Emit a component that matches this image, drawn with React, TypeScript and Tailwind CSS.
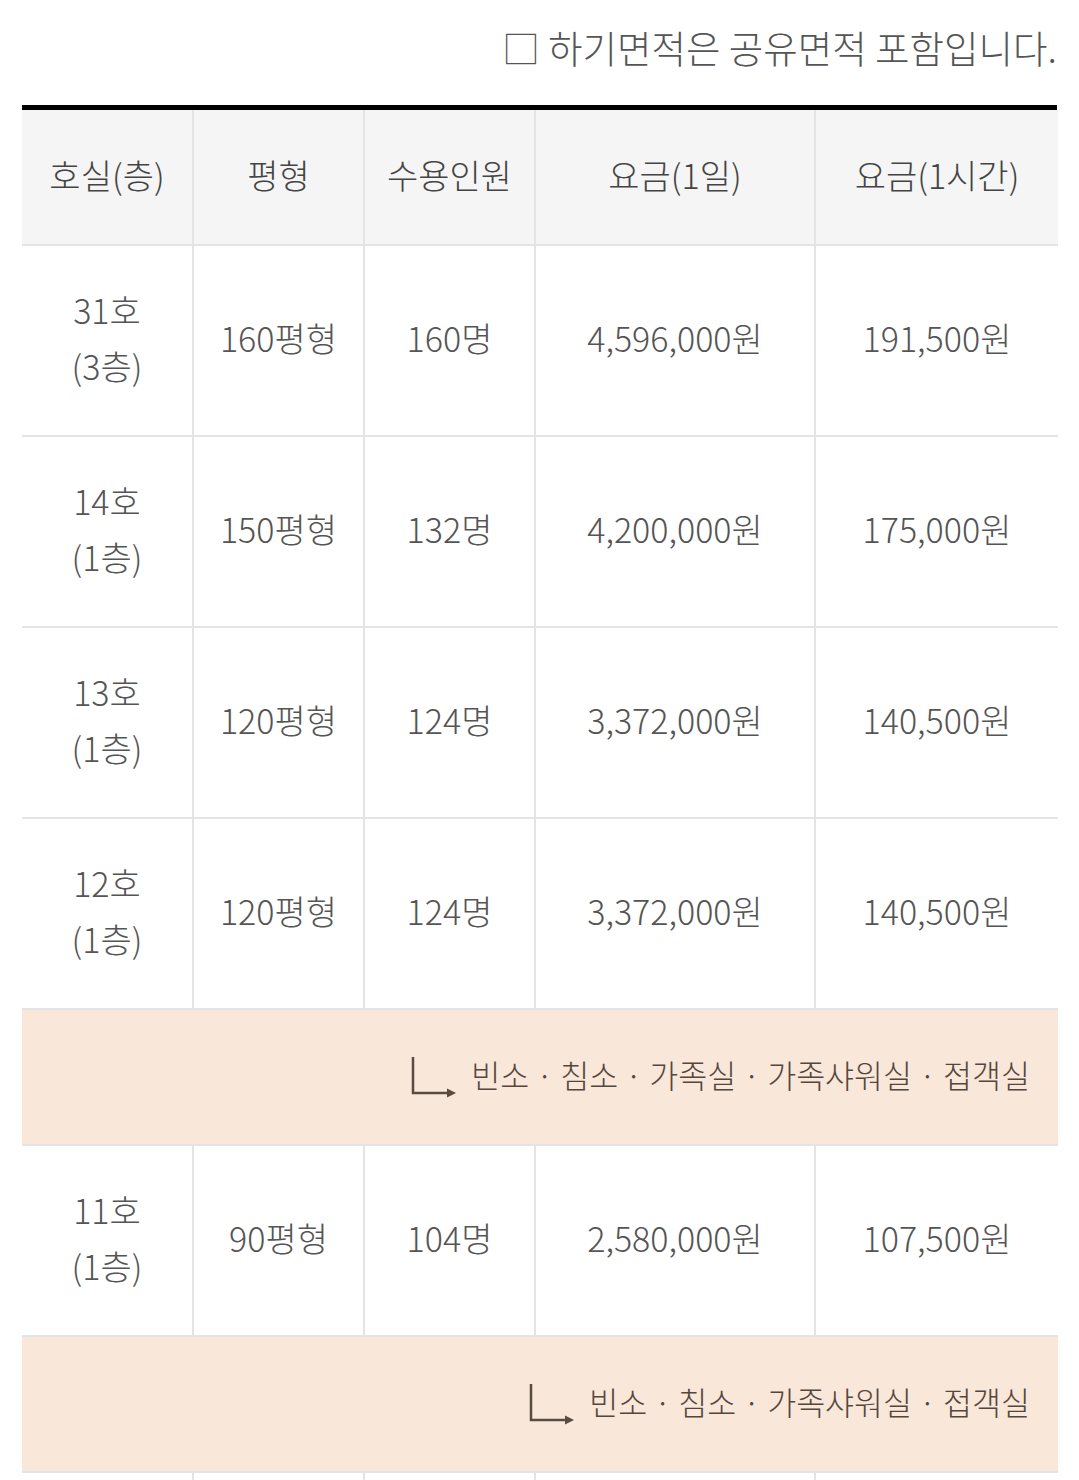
import React from "react";

const font = { fontFamily: '"Noto Sans CJK KR", "Noto Sans", sans-serif' };

type Row = { room: string; floor: string; size: string; cap: string; day: string; hour: string };

const rows1: Row[] = [
  { room: "31호", floor: "(3층)", size: "160평형", cap: "160명", day: "4,596,000원", hour: "191,500원" },
  { room: "14호", floor: "(1층)", size: "150평형", cap: "132명", day: "4,200,000원", hour: "175,000원" },
  { room: "13호", floor: "(1층)", size: "120평형", cap: "124명", day: "3,372,000원", hour: "140,500원" },
  { room: "12호", floor: "(1층)", size: "120평형", cap: "124명", day: "3,372,000원", hour: "140,500원" },
];

const rows2: Row[] = [
  { room: "11호", floor: "(1층)", size: "90평형", cap: "104명", day: "2,580,000원", hour: "107,500원" },
];

const cellBase = "flex items-center justify-center text-center border-b-2 border-[#e4e4e4] pb-[6px]";

function Arrow() {
  return (
    <svg width="46" height="42" viewBox="0 0 46 42" className="shrink-0">
      <path d="M2 1 V37 H38" fill="none" stroke="#5a4b40" strokeWidth="2.5" />
      <polygon points="36,32.5 45,37 36,41.5" fill="#5a4b40" />
    </svg>
  );
}

function DataRow({ r }: { r: Row }) {
  return (
    <>
      <div className={`${cellBase} h-[191px] border-r-2 flex-col leading-[56px]`}>
        <span>{r.room}</span>
        <span>{r.floor}</span>
      </div>
      <div className={`${cellBase} h-[191px] border-r-2`}>{r.size}</div>
      <div className={`${cellBase} h-[191px] border-r-2`}>{r.cap}</div>
      <div className={`${cellBase} h-[191px] border-r-2`}>{r.day}</div>
      <div className={`${cellBase} h-[191px]`}>{r.hour}</div>
    </>
  );
}

function Facility({ text }: { text: string }) {
  return (
    <div className="col-span-5 h-[136px] bg-[#f9e7da] border-b-2 border-[#e4e4e4] flex items-center justify-end pr-[28px] gap-[14px] text-[#54463c] text-[31.5px] font-light">
      <Arrow />
      <span className="leading-none pb-[4px]">{text}</span>
    </div>
  );
}

export default function App() {
  return (
    <div className="w-[1079px] bg-white px-[22px] overflow-hidden h-[1480px]" style={font}>
      <div className="pt-[20px] leading-[54px] text-[37.5px] text-[#555] text-right font-light">
        □ 하기면적은 공유면적 포함입니다.
      </div>
      <div className="mt-[31px] border-t-[5px] border-black">
        <div className="grid grid-cols-[172px_171px_171px_280px_242px] text-[34px] text-[#555] font-light">
          <div className={`${cellBase} h-[136px] border-r-2 bg-[#f5f5f5] text-[#444]`}>호실(층)</div>
          <div className={`${cellBase} h-[136px] border-r-2 bg-[#f5f5f5] text-[#444]`}>평형</div>
          <div className={`${cellBase} h-[136px] border-r-2 bg-[#f5f5f5] text-[#444]`}>수용인원</div>
          <div className={`${cellBase} h-[136px] border-r-2 bg-[#f5f5f5] text-[#444]`}>요금(1일)</div>
          <div className={`${cellBase} h-[136px] bg-[#f5f5f5] text-[#444]`}>요금(1시간)</div>
          {rows1.map((r) => (
            <DataRow key={r.room} r={r} />
          ))}
          <Facility text="빈소 · 침소 · 가족실 · 가족샤워실 · 접객실" />
          {rows2.map((r) => (
            <DataRow key={r.room} r={r} />
          ))}
          <Facility text="빈소 · 침소 · 가족샤워실 · 접객실" />
          <div className="h-[191px] border-r-2 border-[#e4e4e4]" />
          <div className="h-[191px] border-r-2 border-[#e4e4e4]" />
          <div className="h-[191px] border-r-2 border-[#e4e4e4]" />
          <div className="h-[191px] border-r-2 border-[#e4e4e4]" />
          <div className="h-[191px]" />
        </div>
      </div>
    </div>
  );
}
